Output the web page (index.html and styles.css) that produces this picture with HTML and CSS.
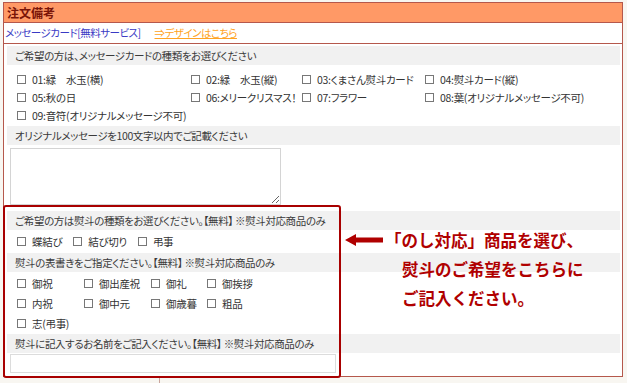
FILE: index.html
```html
<!DOCTYPE html>
<html lang="ja">
<head>
    <meta charset="UTF-8">
    <meta name="viewport" content="width=device-width, initial-scale=1.0">
    <title>注文備考</title>
    <link rel="stylesheet" href="styles.css">
</head>
<body>
    <div class="page">
        <div class="panel">
            <div class="panel-head">注文備考</div>
            <div class="sub-head">
                <span class="card-title">メッセージカード[無料サービス]</span>
                <a href="#" class="design-link">⇒デザインはこちら</a>
            </div>
            <div class="panel-body">
                <div class="q">ご希望の方は、メッセージカードの種類をお選びください</div>
                <div class="opts card-opts">
                    <label class="opt"><span class="box"></span>01:緑　水玉(横)</label>
                    <label class="opt"><span class="box"></span>02:緑　水玉(縦)</label>
                    <label class="opt"><span class="box"></span>03:くまさん熨斗カード</label>
                    <label class="opt"><span class="box"></span>04:熨斗カード(縦)</label>
                    <label class="opt"><span class="box"></span>05:秋の日</label>
                    <label class="opt"><span class="box"></span>06:メリークリスマス！</label>
                    <label class="opt"><span class="box"></span>07:フラワー</label>
                    <label class="opt"><span class="box"></span>08:葉(オリジナルメッセージ不可)</label>
                    <label class="opt"><span class="box"></span>09:音符(オリジナルメッセージ不可)</label>
                </div>
                <div class="q">オリジナルメッセージを100文字以内でご記載ください</div>
                <div class="memo-wrap">
                    <textarea class="memo"></textarea>
                </div>
                <div class="q">ご希望の方は熨斗の種類をお選びください。【無料】 ※熨斗対応商品のみ</div>
                <div class="opts inline-opts">
                    <label class="opt"><span class="box"></span>蝶結び</label>
                    <label class="opt"><span class="box"></span>結び切り</label>
                    <label class="opt"><span class="box"></span>弔事</label>
                </div>
                <div class="q">熨斗の表書きをご指定ください。【無料】 ※熨斗対応商品のみ</div>
                <div class="opts noshi-opts">
                    <label class="opt"><span class="box"></span>御祝</label>
                    <label class="opt"><span class="box"></span>御出産祝</label>
                    <label class="opt"><span class="box"></span>御礼</label>
                    <label class="opt"><span class="box"></span>御挨拶</label>
                    <label class="opt"><span class="box"></span>内祝</label>
                    <label class="opt"><span class="box"></span>御中元</label>
                    <label class="opt"><span class="box"></span>御歳暮</label>
                    <label class="opt"><span class="box"></span>粗品</label>
                    <label class="opt"><span class="box"></span>志(弔事)</label>
                </div>
                <div class="q">熨斗に記入するお名前をご記入ください。【無料】 ※熨斗対応商品のみ</div>
                <div class="name-wrap">
                    <input type="text" class="name-input">
                </div>
            </div>
        </div>
        <div class="next-row"><div class="next-cell"></div></div>

        <!-- 説明用の注記 -->
        <div class="highlight"></div>
        <svg class="arrow" width="38" height="14" viewBox="0 0 38 14">
            <path d="M0 7 L11 1 L11 13 Z M10 4.6 H38 V9.4 H10 Z" fill="#b00000"/>
        </svg>
        <div class="note">
            <p class="note-first">「のし対応」商品を選び、</p>
            <p>熨斗のご希望をこちらに</p>
            <p>ご記入ください。</p>
        </div>
    </div>
</body>
</html>
```

FILE: styles.css
```css
body {
    margin: 0;
    padding: 0;
    background-color: #f8f6f1;
    font-family: "Noto Sans CJK JP", "Noto Sans", sans-serif;
    font-size: 10.5px;
    letter-spacing: -0.3px;
    color: #333;
}
.page {
    position: relative;
    padding: 2px 4px 0 3px;
    height: 381px;
    overflow: hidden;
}
.panel {
    border: 1px solid #b5584c;
    background: #fff;
}
.panel-head {
    height: 19px;
    line-height: 19px;
    padding-left: 3px;
    background-color: #ff9966;
    border-bottom: 1px solid #b5584c;
    font-weight: bold;
    font-size: 12px;
    letter-spacing: 0;
    color: #7a1408;
}
.sub-head {
    height: 20px;
    line-height: 20px;
    padding-left: 1px;
    border-bottom: 1px solid #b5584c;
    font-feature-settings: "palt";
    letter-spacing: -0.5px;
}
.card-title {
    color: #3a3ac4;
}
.design-link {
    margin-left: 12px;
    color: #ffa322;
}
.panel-body {
    padding: 2px 2px 3px 3px;
}
.q {
    height: 19px;
    line-height: 19px;
    padding-left: 8px;
    background-color: #f1f1f1;
    font-feature-settings: "palt";
    letter-spacing: -0.4px;
    color: #3a3a3a;
}
.opts {
    padding-left: 10px;
    font-feature-settings: "palt";
}
.opt {
    display: flex;
    align-items: center;
    white-space: nowrap;
    height: 18px;
}
.box {
    width: 7px;
    height: 7px;
    border: 1px solid #777;
    background: #fff;
    margin-right: 6px;
    flex: none;
}
.card-opts {
    display: grid;
    grid-template-columns: 174px 111px 123px auto;
    padding-top: 5px;
    padding-bottom: 2px;
}
.inline-opts {
    display: flex;
    gap: 11px;
    padding-top: 2px;
    padding-bottom: 2px;
}
.inline-opts .opt {
    height: 19px;
}
.noshi-opts {
    display: grid;
    grid-template-columns: 67px 67px 56px auto;
    padding-top: 1px;
    padding-bottom: 1px;
}
.noshi-opts .opt {
    height: 20px;
}
.memo-wrap {
    padding: 3px 0 6px 3px;
    height: 57px;
}
.memo {
    display: block;
    box-sizing: border-box;
    width: 271px;
    height: 57px;
    margin: 0;
    border: 1px solid #d4d4d4;
    resize: both;
}
.name-wrap {
    padding: 1px 0 0 3px;
}
.name-input {
    display: block;
    box-sizing: border-box;
    width: 326px;
    height: 19px;
    margin: 0;
    border: 1px solid #dcdcdc;
}
.next-row {
    height: 6px;
    display: flex;
}
.next-cell {
    width: 156px;
    border-right: 1px solid #c9a49c;
}
.highlight {
    position: absolute;
    left: 3px;
    top: 205px;
    width: 334px;
    height: 169px;
    border: 2px solid #a80000;
    border-radius: 3px;
}
.arrow {
    position: absolute;
    left: 345px;
    top: 233px;
}
.note {
    position: absolute;
    left: 402px;
    top: 226px;
    color: #b00000;
    font-weight: bold;
    font-size: 16.5px;
    letter-spacing: 0;
}
.note p {
    margin: 0;
    height: 29px;
    line-height: 29px;
}
.note .note-first {
    margin-left: -17px;
}
```
